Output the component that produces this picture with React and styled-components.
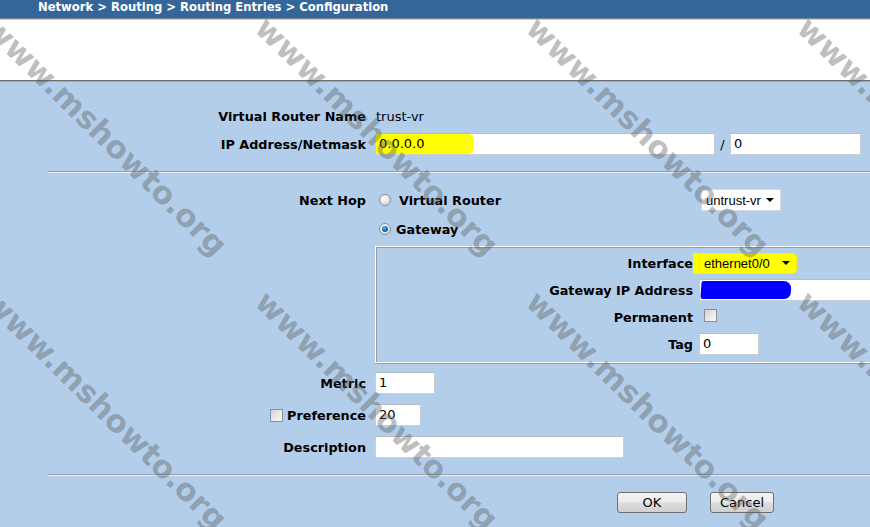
import React from 'react'
import styled, { createGlobalStyle, css } from 'styled-components'

const GlobalStyle = createGlobalStyle`
  html, body {
    margin: 0;
    padding: 0;
    background: #b3ceea;
    overflow: hidden;
  }
  body {
    font-family: "DejaVu Sans", Verdana, sans-serif;
    font-size: 13px;
    color: #000;
  }
`

const Page = styled.div`
  position: relative;
  width: 870px;
  height: 527px;
  overflow: hidden;
  background: #b3ceea;
`

const TopBar = styled.div`
  height: 18px;
  background: #35669a;
  color: #fff;
  font-weight: bold;
  font-size: 11.6px;
  line-height: 14px;
  padding-left: 38px;
  box-shadow: 0 1px 0 #7b8591, 0 2px 0 #c9ccd0;
  box-sizing: border-box;
`

const WhiteBand = styled.div`
  height: 60px;
  margin-top: 2px;
  background: #fff;
  border-bottom: 1px solid #6e6e6e;
  box-shadow: 0 1px 0 #a3a9b0;
`

const Form = styled.div`
  padding-top: 24px;
  display: flex;
  flex-direction: column;
`

const Row = styled.div`
  display: grid;
  grid-template-columns: ${(p) => p.$label || 366}px minmax(0, 1fr);
  column-gap: ${(p) => p.$gap || 9}px;
  align-items: center;
  height: ${(p) => (p.$auto ? 'auto' : '22px')};
  margin-top: ${(p) => p.$top || 0}px;
`

const Label = styled.div`
  font-weight: bold;
  font-size: 12.8px;
  text-align: right;
  white-space: nowrap;
  display: flex;
  justify-content: flex-end;
  align-items: center;
  gap: 4px;
`

const Value = styled.span`
  font-size: 13px;
  padding-left: 1px;
`

const Field = styled.div`
  box-sizing: border-box;
  width: ${(p) => p.$w}px;
  height: 22px;
  background: #fff;
  border: 1px solid #c9ced5;
  border-top-color: #b7bdc5;
  font-size: 13px;
  line-height: 20px;
  padding-left: 3px;
  display: flex;
  align-items: center;
  white-space: nowrap;
  overflow: hidden;
`

const Marker = styled.span`
  display: flex;
  align-items: center;
  height: 100%;
  margin-left: -3px;
  padding-left: 3px;
  width: ${(p) => p.$w}px;
  background: #ffff00;
  border-radius: 0 6px 6px 0;
`

const Scribble = styled.span`
  display: block;
  width: 90px;
  height: 18px;
  margin-left: -2px;
  background: #0000ff;
  border-radius: 2px 8px 6px 3px;
  transform: skewX(-4deg);
`

const Split = styled.div`
  display: flex;
  align-items: center;
`

const Slash = styled.span`
  width: 15px;
  text-align: center;
  font-size: 13px;
`

const Divider = styled.div`
  margin: 16px 0 16px 48px;
  border-top: 1px solid #9a9ea4;
  border-bottom: 1px solid #e9eff6;
`

const HopCell = styled.div`
  display: grid;
  grid-template-columns: 326px auto;
  align-items: center;
  justify-content: start;
`

const Option = styled.label`
  display: flex;
  align-items: center;
  gap: ${(p) => p.$gap || 8}px;
  padding-left: 4px;
  font-weight: bold;
  font-size: 12.8px;
`

const Radio = styled.span`
  box-sizing: border-box;
  width: 12px;
  height: 12px;
  border-radius: 50%;
  border: 1px solid #8d8f92;
  background: radial-gradient(circle at 40% 35%, #ffffff 0%, #e4e4e4 55%, #c8c8c8 100%);
  display: flex;
  align-items: center;
  justify-content: center;
  ${(p) =>
    p.$checked &&
    css`
      &::after {
        content: '';
        width: 6px;
        height: 6px;
        border-radius: 50%;
        background: radial-gradient(circle at 40% 35%, #5bb2f0 0%, #1566b8 55%, #0b3d7c 100%);
      }
    `}
`

const Check = styled.span`
  box-sizing: border-box;
  display: inline-block;
  width: 13px;
  height: 13px;
  border: 1px solid #8d8f92;
  background: linear-gradient(135deg, #d2d2d2 0%, #ececec 60%, #fafafa 100%);
  margin-left: ${(p) => p.$ml || 0}px;
`

const Select = styled.div`
  box-sizing: border-box;
  width: ${(p) => p.$w}px;
  height: ${(p) => p.$h || 21}px;
  background: ${(p) => (p.$mark ? '#ffff00' : '#fff')};
  border: 1px solid ${(p) => (p.$mark ? '#f2f200' : '#d3d9e0')};
  box-shadow: ${(p) => (p.$mark ? '-6px 0 0 #ffff00' : 'none')};
  border-radius: ${(p) => (p.$mark ? '0 5px 5px 0' : '0')};
  font-family: "Liberation Sans", Arial, sans-serif;
  font-size: 13px;
  display: flex;
  align-items: center;
  justify-content: space-between;
  padding: 0 6px 0 4px;
  &::after {
    content: '';
    border-left: 4px solid transparent;
    border-right: 4px solid transparent;
    border-top: 4px solid #000;
  }
`

const Box = styled.div`
  box-sizing: border-box;
  margin: 6px -30px 0 0;
  padding: 5px 0 7px 0;
  border: 1px solid #fff;
  box-shadow: 0 1px 0 #9a9a9a, inset 1px 1px 0 #9a9a9a;
  display: flex;
  flex-direction: column;
  gap: 5px;
`

const Buttons = styled.div`
  display: flex;
  justify-content: flex-end;
  gap: 23px;
  padding-right: 96px;
`

const Button = styled.button`
  box-sizing: border-box;
  width: ${(p) => p.$w}px;
  height: 21px;
  border: 1px solid #707070;
  border-radius: 3px;
  background: linear-gradient(#f4f4f4 0%, #ececec 45%, #dcdcdc 55%, #d0d0d0 100%);
  font-family: "DejaVu Sans", Verdana, sans-serif;
  font-size: 13px;
  color: #000;
  padding: 0;
`

const Watermarks = styled.div`
  position: absolute;
  inset: 0;
  pointer-events: none;
`

const Mark = styled.span`
  position: absolute;
  left: ${(p) => p.$x}px;
  top: ${(p) => p.$y}px;
  transform: translate(-50%, -50%) rotate(44.5deg);
  font-family: "DejaVu Sans", Verdana, sans-serif;
  font-weight: bold;
  font-size: 31px;
  color: rgba(86, 86, 86, 0.4);
  white-space: nowrap;
`

const marks = []
for (let j = 0; j < 2; j++) {
  for (let i = 0; i < 4; i++) {
    marks.push({ x: 106 + 271 * i, y: 136 + 274 * j })
  }
}

function App() {
  return (
    <Page>
      <GlobalStyle />
      <TopBar>Network &gt; Routing &gt; Routing Entries &gt; Configuration</TopBar>
      <WhiteBand />

      <Form>
        <Row>
          <Label>Virtual Router Name</Label>
          <Value>trust-vr</Value>
        </Row>
        <Row $top={6}>
          <Label>IP Address/Netmask</Label>
          <Split>
            <Field $w={340}>
              <Marker $w={95}>0.0.0.0</Marker>
            </Field>
            <Slash>/</Slash>
            <Field $w={131}>0</Field>
          </Split>
        </Row>

        <Divider />

        <Row>
          <Label>Next Hop</Label>
          <HopCell>
            <Option>
              <Radio />
              Virtual Router
            </Option>
            <Select $w={80} $h={22}>untrust-vr</Select>
          </HopCell>
        </Row>
        <Row $top={7}>
          <div />
          <Option $gap={5}>
            <Radio $checked />
            Gateway
          </Option>
        </Row>

        <Row $auto>
          <div />
          <Box>
            <Row $label={317} $gap={6}>
              <Label>Interface</Label>
              <Select $w={98} $mark>ethernet0/0</Select>
            </Row>
            <Row $label={317} $gap={6}>
              <Label>Gateway IP Address</Label>
              <Field $w={200}>
                <Scribble />
              </Field>
            </Row>
            <Row $label={317} $gap={6}>
              <Label>Permanent</Label>
              <div>
                <Check $ml={5} />
              </div>
            </Row>
            <Row $label={317} $gap={6}>
              <Label>Tag</Label>
              <Field $w={60}>0</Field>
            </Row>
          </Box>
        </Row>

        <Row $top={9}>
          <Label>Metric</Label>
          <Field $w={60}>1</Field>
        </Row>
        <Row $top={10}>
          <Label>
            <Check />
            Preference
          </Label>
          <Field $w={46}>20</Field>
        </Row>
        <Row $top={10}>
          <Label>Description</Label>
          <Field $w={249} />
        </Row>

        <Divider />

        <Buttons>
          <Button $w={70}>OK</Button>
          <Button $w={64}>Cancel</Button>
        </Buttons>
      </Form>

      <Watermarks>
        {marks.map((m, i) => (
          <Mark key={i} $x={m.x} $y={m.y}>
            www.mshowto.org
          </Mark>
        ))}
      </Watermarks>
    </Page>
  )
}

export default App
